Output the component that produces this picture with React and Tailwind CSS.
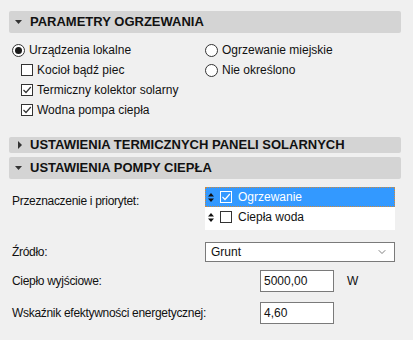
import { ChevronDown } from 'lucide-react';

const font = { fontFamily: '"Liberation Sans", Arial, sans-serif' };

const Radio = ({ checked, label }) => (
  <div className="flex items-center h-[20px] gap-[4px]">
    <span className="w-[13px] h-[13px] rounded-full border border-[#333] bg-white flex items-center justify-center">
      {checked && <span className="w-[7px] h-[7px] rounded-full bg-[#1a1a1a]" />}
    </span>
    <span>{label}</span>
  </div>
);

const Check = ({ checked, light }) => (
  <span
    className={`w-[12px] h-[12px] border flex items-center justify-center ${
      light ? 'border-white' : 'border-[#333] bg-white'
    }`}
  >
    {checked && (
      <svg width="10" height="10" viewBox="0 0 10 10">
        <path d="M1.5 5 L4 7.5 L8.8 2" fill="none" stroke={light ? '#fff' : '#333'} strokeWidth="1.2" />
      </svg>
    )}
  </span>
);

const CheckRow = ({ checked, label }) => (
  <div className="flex items-center h-[20px] gap-[4px] pl-[9px]">
    <Check checked={checked} />
    <span>{label}</span>
  </div>
);

const Section = ({ open, title, tall = true }) => (
  <div
    className={`flex items-center rounded-[2px] bg-[#d4d4d4] pl-[6px] gap-[8px] ${
      tall ? 'h-[22px]' : 'h-[16px]'
    }`}
  >
    {open ? (
      <svg width="7" height="4" viewBox="0 0 7 4">
        <path d="M0 0 H7 L3.5 4 Z" fill="#333" />
      </svg>
    ) : (
      <svg width="7" height="8" viewBox="0 0 7 8" className="ml-[1px] mr-[-1px]">
        <path d="M2 0 L6 4 L2 8 Z" fill="#333" />
      </svg>
    )}
    <span className="font-bold text-[13px] text-[#111]">{title}</span>
  </div>
);

const Updown = () => (
  <svg width="6" height="9" viewBox="0 0 6 9">
    <path d="M0 3.5 L3 0 L6 3.5 Z M0 5.5 L3 9 L6 5.5 Z" fill="#111" />
  </svg>
);

export default function App() {
  return (
    <div
      className="w-[413px] h-[340px] bg-[#f0f0f0] pt-[11px] pl-[9px] pr-[12px] text-[12px] text-[#111] overflow-hidden"
      style={font}
    >
      <Section open title="PARAMETRY OGRZEWANIA" />

      <div className="flex mt-[7px] pl-[3px]">
        <div className="w-[193px]">
          <Radio checked label="Urządzenia lokalne" />
          <CheckRow label="Kocioł bądź piec" />
          <CheckRow checked label="Termiczny kolektor solarny" />
          <CheckRow checked label="Wodna pompa ciepła" />
        </div>
        <div>
          <Radio label="Ogrzewanie miejskie" />
          <Radio label="Nie określono" />
        </div>
      </div>

      <div className="mt-[17px]">
        <Section title="USTAWIENIA TERMICZNYCH PANELI SOLARNYCH" tall={false} />
      </div>
      <div className="mt-[4px]">
        <Section open title="USTAWIENIA POMPY CIEPŁA" />
      </div>

      <div className="pl-[3px] tracking-[-0.3px]">
        <div className="flex mt-[8px]">
          <div className="w-[193px] pt-[4px] h-[20px] leading-[20px]">Przeznaczenie i priorytet:</div>
          <div className="w-[190px] bg-white tracking-normal">
            <div className="h-[20px] bg-[#3399ff] border border-dotted border-[#d08a3a] flex items-center pl-[2px] gap-[6px] text-white">
              <Updown />
              <Check checked light />
              <span>Ogrzewanie</span>
            </div>
            <div className="h-[23px] flex items-center pl-[3px] pb-[3px] gap-[6px]">
              <Updown />
              <Check />
              <span>Ciepła woda</span>
            </div>
          </div>
        </div>

        <div className="flex items-center mt-[12px]">
          <div className="w-[193px]">Źródło:</div>
          <div className="w-[190px] h-[20px] bg-white border border-[#7a7a7a] flex items-center justify-between pl-[5px] pr-[6px] tracking-normal">
            <span>Grunt</span>
            <ChevronDown size={12} strokeWidth={1.5} className="text-[#555]" />
          </div>
        </div>

        <div className="flex items-center mt-[8px]">
          <div className="w-[248px]">Ciepło wyjściowe:</div>
          <div className="w-[74px] h-[22px] bg-white border border-[#7a7a7a] flex items-center pl-[3px] tracking-normal">5000,00</div>
          <div className="ml-[13px] self-start mt-[2px]">W</div>
        </div>

        <div className="flex items-center mt-[10px]">
          <div className="w-[248px]">Wskaźnik efektywności energetycznej:</div>
          <div className="w-[74px] h-[22px] bg-white border border-[#7a7a7a] flex items-center pl-[3px] tracking-normal">4,60</div>
        </div>
      </div>
    </div>
  );
}
